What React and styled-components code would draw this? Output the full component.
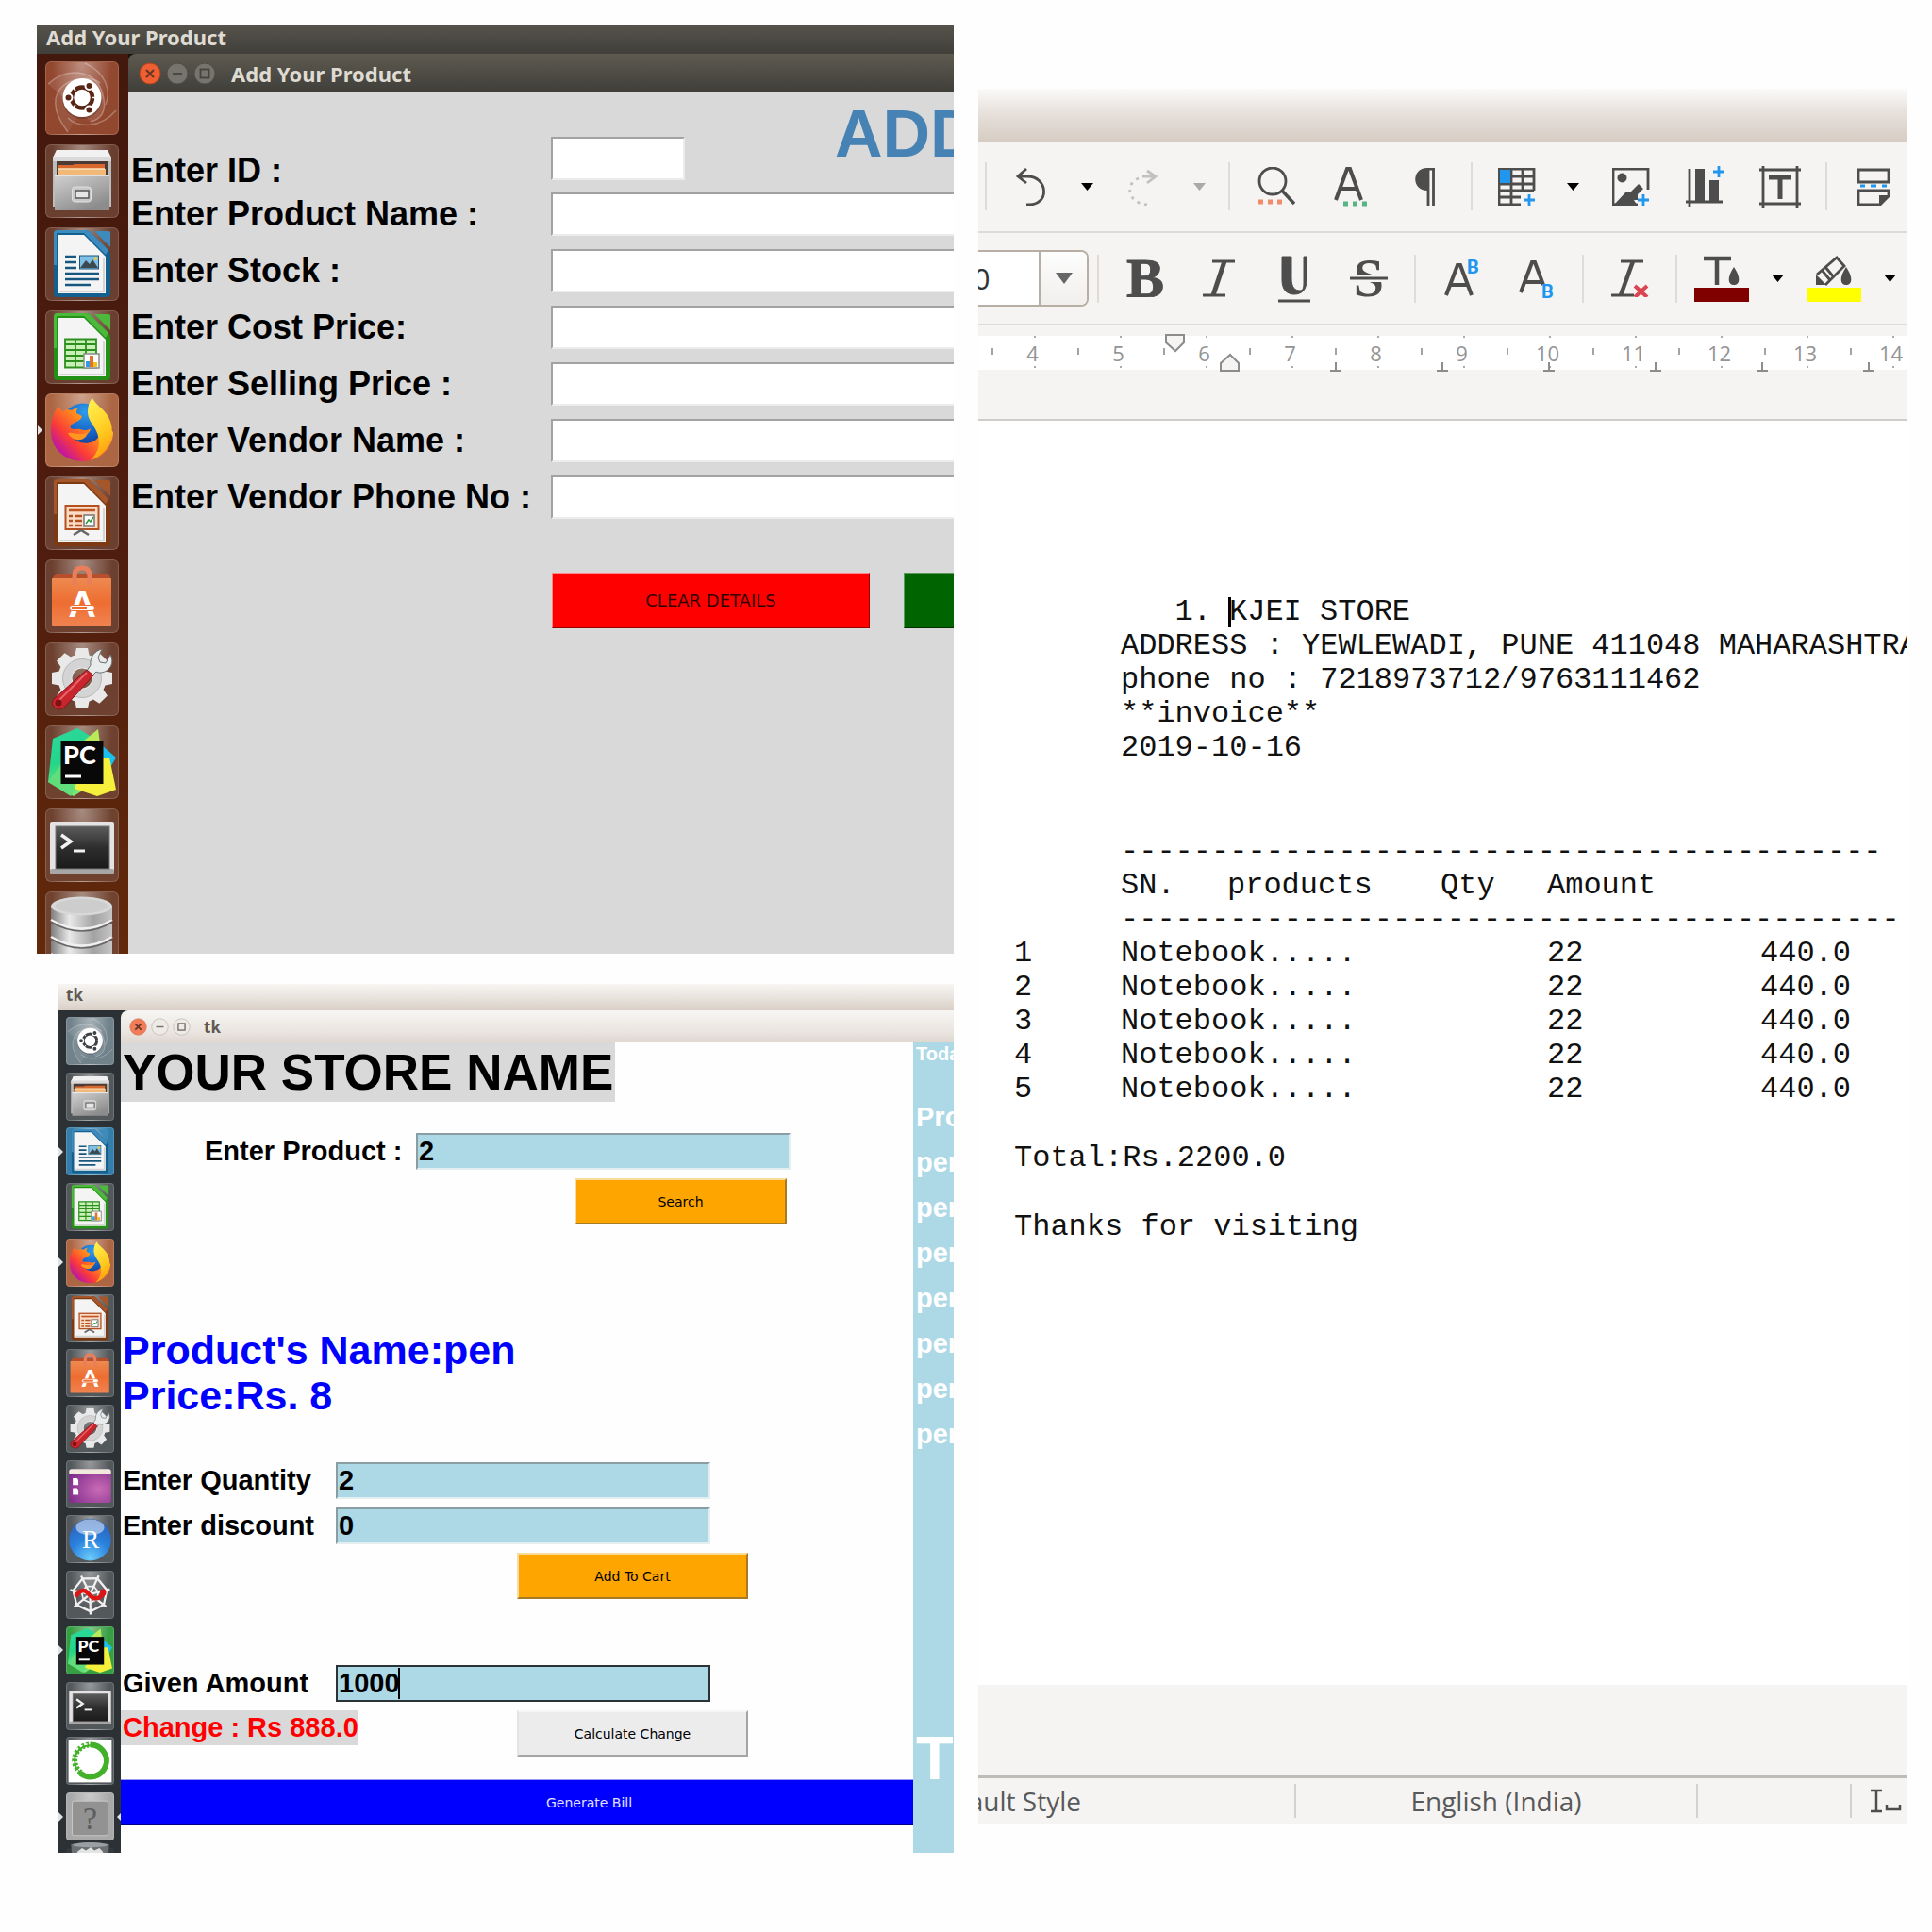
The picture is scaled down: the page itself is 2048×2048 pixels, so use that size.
import React from "react";
import styled, { createGlobalStyle, css } from "styled-components";

const GlobalStyle = createGlobalStyle`
  * { box-sizing: border-box; }
  body { margin: 0; background: #fefefe; }
  button, input, select { font: inherit; color: inherit; margin: 0; }
  button { cursor: pointer; }
`;

const UI_FONT = '"Noto Sans", "Open Sans", sans-serif';
const TK_FONT = '"Liberation Sans", Arial, sans-serif';
const BUTTON_FONT = '"DejaVu Sans", sans-serif';
const INK = "#4d4d4d";

/* ---------- page ---------- */

const Page = styled.main`
  display: grid;
  grid-template-columns: minmax(0, 1fr) minmax(0, 1fr);
  gap: 26px;
  padding: 26px;
  align-items: start;
`;

const LeftColumn = styled.div`
  display: flex;
  flex-direction: column;
  gap: 32px;
`;

const Desktop = styled.section`
  display: flex;
  flex-direction: column;
  min-height: 0;
  overflow: hidden;
  margin-left: ${(p) => p.$inset}px;
  aspect-ratio: ${(p) => p.$ratio};
`;

const DesktopBody = styled.div`
  display: flex;
  flex: 1;
  min-height: 0;
  background: ${(p) => (p.$light ? "#2b3033" : "#1c1210")};
`;

const darkBar = css`
  color: #dfdbd2;
  background: linear-gradient(#56534c, #403f39);
`;
const lightBar = css`
  color: #5e5952;
  background: linear-gradient(#f7f5f3, #e6e0da 60%, #d9cfc6);
`;

const MenuBar = styled.header`
  flex: none;
  display: flex;
  align-items: center;
  font-family: ${UI_FONT};
  font-weight: 700;
  ${(p) => (p.$light ? lightBar : darkBar)}
  height: ${(p) => (p.$light ? 28 : 31)}px;
  padding: 0 ${(p) => (p.$light ? 8 : 10)}px 6px;
  font-size: ${(p) => (p.$light ? 17 : 22)}px;
`;

const Win = styled.div`
  flex: 1;
  min-width: 0;
  display: flex;
  flex-direction: column;
`;

const TitleBar = styled.header`
  flex: none;
  display: flex;
  align-items: center;
  font-family: ${UI_FONT};
  font-weight: 700;
  border-top-left-radius: 8px;
  ${(p) => (p.$light ? lightBar : darkBar)}
  ${(p) => p.$light && "background: linear-gradient(#f7f6f3, #e9e4df 70%, #dfd7d0);"}
  ${(p) => !p.$light && "background: linear-gradient(#5e5a50, #3f3e39);"}
  height: ${(p) => (p.$light ? 34 : 41)}px;
  gap: ${(p) => (p.$light ? 4 : 5)}px;
  padding-left: ${(p) => (p.$light ? 9 : 11)}px;
  font-size: ${(p) => (p.$light ? 17 : 22)}px;
`;

const TitleText = styled.span`
  margin-left: ${(p) => (p.$light ? 10 : 11)}px;
`;

const WinButton = styled.button`
  padding: 0;
  border: 0;
  background: none;
  display: flex;
  svg {
    display: block;
    width: ${(p) => (p.$light ? 19 : 24)}px;
    height: ${(p) => (p.$light ? 19 : 24)}px;
  }
`;

function WindowControls({ light }) {
  const kinds = ["Close", "Minimize", "Maximize"];
  return kinds.map((k) => {
    const close = k === "Close";
    const fill = close ? (light ? "#f07c58" : "#ee5f31") : light ? "#eeebe7" : "#76746c";
    const ring = close ? (light ? "#d9805f" : "#b5431c") : light ? "#bfb8b0" : "#4f4d47";
    const mark = close ? "#6b3626" : light ? "#77716a" : "#45433e";
    return (
      <WinButton key={k} type="button" aria-label={k} $light={light}>
        <svg viewBox="0 0 24 24" fill="none">
          <circle cx="12" cy="12" r="11" fill={fill} stroke={ring} />
          {close && <path d="M8 8l8 8M16 8l-8 8" stroke={mark} strokeWidth="2.2" />}
          {k === "Minimize" && <path d="M7 12h10" stroke={mark} strokeWidth="1.8" />}
          {k === "Maximize" && <rect x="7.500" y="7.500" width="9" height="9" stroke={mark} strokeWidth="1.8" />}
        </svg>
      </WinButton>
    );
  });
}

/* ---------- launcher ---------- */

const Launcher = styled.nav`
  flex: none;
  display: flex;
  flex-direction: column;
  align-items: center;
  overflow: hidden;
  ${(p) =>
    p.$light
      ? css`
          width: 66px;
          padding-top: 7px;
          justify-content: space-between;
          background: #2b3134;
          > :last-child {
            margin-bottom: -46px;
          }
        `
      : css`
          width: 97px;
          padding-top: 8px;
          padding-right: 2px;
          gap: 10px;
          background: linear-gradient(#43180d, #4f1d0f 55%, #62290a);
        `}
`;

const Tile = styled.button`
  position: relative;
  flex: none;
  padding: 0;
  border: 1px solid ${(p) => (p.$tint === "transparent" ? "transparent" : "rgba(255, 255, 255, 0.16)")};
  border-radius: ${(p) => (p.$light ? 4 : 6)}px;
  width: ${(p) => (p.$light ? 51 : 78)}px;
  height: ${(p) => (p.$light ? 51 : 78)}px;
  background: radial-gradient(ellipse at 50% 0, rgba(255, 255, 255, 0.42), rgba(255, 255, 255, 0.04) 60%),
    ${(p) => p.$tint};
  svg {
    position: absolute;
    inset: -1px;
    width: calc(100% + 2px);
    height: calc(100% + 2px);
    overflow: visible;
  }
`;

const Running = styled.i`
  position: absolute;
  top: calc(50% - 5px);
  width: 0;
  height: 0;
  border: 5px solid transparent;
  ${(p) =>
    p.$right
      ? css`
          right: -9px;
          border-right-color: #e3e3e3;
          border-left-width: 0;
        `
      : css`
          left: -9px;
          border-left-color: #e3e3e3;
          border-right-width: 0;
        `}
`;

function UbuntuIcon({ dark = "#5a2415" }) {
  return (
    <svg viewBox="0 0 78 78" fill="none">
      <g stroke="#fff" strokeOpacity="0.28" strokeWidth="1.5">
        <path d="M3 24C22 6 52 8 60 32s-4 30-12 32" fill="#fff" fillOpacity="0.1" />
        <path d="M24 75C6 52 8 34 20 25s32-8 38-2" fill="#fff" fillOpacity="0.08" />
        <path d="M75 52C58 72 34 70 24 60" />
        <path d="M42 2C64 12 70 30 64 46" />
      </g>
      <circle cx="39" cy="40" r="21" fill="#000" fillOpacity="0.2" />
      <circle cx="39" cy="38.500" r="20.500" fill="#fff" />
      <circle cx="39" cy="38.500" r="11" stroke={dark} strokeWidth="4.500" />
      <g fill={dark} stroke="#fff" strokeWidth="2">
        <circle cx="24.500" cy="38.500" r="4" />
        <circle cx="46.500" cy="26" r="4" />
        <circle cx="46.500" cy="51.500" r="4" />
      </g>
      <path d="M32 31l-3-4M32 46l-3 4M50 38.500h6" stroke="#fff" strokeWidth="1.500" />
    </svg>
  );
}

function FilesIcon() {
  return (
    <svg viewBox="0 0 78 78">
      <defs>
        <linearGradient id="drawer" x1="0" y1="0" x2="0.600" y2="1">
          <stop offset="0" stopColor="#d2d2d2" />
          <stop offset="1" stopColor="#8c8c8c" />
        </linearGradient>
      </defs>
      <path d="M12 6h54l4 10v50H8V16z" fill="#bdbdbd" />
      <path d="M12 6h54l4 8H8z" fill="#f1f1f1" />
      <rect x="8" y="13" width="62" height="5" fill="#d9d9d9" />
      <rect x="12" y="18" width="54" height="15" fill="#4b3a35" />
      <path d="M14 22h15l2-1h32v12H14z" fill="#d9682f" />
      <path d="M13 26h51v8H13z" fill="#f2b877" />
      <path d="M14 26h49" stroke="#fbe0b8" strokeWidth="1.500" />
      <rect x="10" y="32" width="58" height="38" fill="url(#drawer)" />
      <path d="M10 33h58" stroke="#ececec" strokeWidth="1.500" />
      <rect x="28.500" y="45" width="20" height="16" rx="3" fill="#c9c9c9" stroke="#e0e0e0" />
      <rect x="32" y="49" width="14" height="8" fill="#e6e6e6" stroke="#555" strokeWidth="1.500" />
    </svg>
  );
}

function OfficeDoc({ color, dark, children }) {
  return (
    <svg viewBox="0 0 78 78">
      <path d="M9 7q0-4 4-4h30q3 0 5 2l19 19q2 2 2 5v41q0 4-4 4H13q-4 0-4-4z" fill={dark} />
      <path d="M9 7q0-4 4-4h30q3 0 5 2l19 19-3 5L41 6H12v34H9z" fill={color} />
      <path d="M52 4h15q2 0 2 2v15z" fill={color} />
      <path d="M13 8h28l23 23v39H13z" fill="#f4f4f4" />
      <path d="M15 68h47V33" fill="none" stroke="#d4d4d4" strokeWidth="2" />
      {children}
    </svg>
  );
}

function WriterIcon() {
  return (
    <OfficeDoc color="#3d8bbd" dark="#12608f">
      <path d="M21 31h12M21 37h12M21 43h12M21 49h36M21 55h36M21 61h27" stroke="#17577f" strokeWidth="2.600" />
      <rect x="36.500" y="30" width="20" height="14" fill="#7fc0e6" stroke="#17577f" />
      <path d="M37 43l6-8 4 4 3-5 6 9z" fill="#3c4a50" />
      <circle cx="53.500" cy="33" r="2" fill="#e8c84a" />
    </OfficeDoc>
  );
}

function CalcIcon() {
  return (
    <OfficeDoc color="#4cb83c" dark="#239016">
      <rect x="21" y="30" width="33" height="31" fill="#c9f0b6" />
      <path
        d="M21 30.500h33v30H21zM21 36h33M21 42h33M21 48h33M21 54h33M32 30v31M43 30v31"
        fill="none"
        stroke="#2c8f1e"
        strokeWidth="1.800"
      />
      <rect x="41" y="46" width="16" height="15" fill="#fff" stroke="#8a8a8a" strokeWidth="1.500" />
      <path d="M43 60v-6h4v6z" fill="#2f9be0" />
      <path d="M47 60V48h4v12z" fill="#e2732e" />
      <path d="M51 60v-5h4v5z" fill="#f0c020" />
    </OfficeDoc>
  );
}

function ImpressIcon() {
  return (
    <OfficeDoc color="#a5562a" dark="#7d3a12">
      <rect x="21.500" y="31" width="35" height="25" fill="#fbdcc8" stroke="#b5501f" strokeWidth="2" />
      <path d="M25 36h28" stroke="#c0561f" strokeWidth="2.500" />
      <path d="M25 42h4M25 47h4M25 52h4M31 42h8M31 47h8M31 52h8" stroke="#b5501f" strokeWidth="2.500" />
      <rect x="41" y="41" width="11" height="12" fill="#fff" stroke="#777" strokeWidth="1.500" />
      <path d="M43 50l3-4 2 2 3-5" fill="none" stroke="#2f9a3a" strokeWidth="1.500" />
      <path d="M30 62l8-5 8 5" fill="none" stroke="#666" strokeWidth="2.500" />
    </OfficeDoc>
  );
}

function FirefoxIcon() {
  return (
    <svg viewBox="0 0 78 78">
      <defs>
        <radialGradient id="globe" cx="0.550" cy="0.200" r="0.900">
          <stop offset="0" stopColor="#2f9bea" />
          <stop offset="0.600" stopColor="#1560c4" />
          <stop offset="1" stopColor="#1c2f7c" />
        </radialGradient>
        <linearGradient id="fox" x1="0.900" y1="0.150" x2="0.150" y2="0.800">
          <stop offset="0" stopColor="#ffd52e" />
          <stop offset="0.400" stopColor="#ff8a1c" />
          <stop offset="0.750" stopColor="#fb3b38" />
          <stop offset="1" stopColor="#c4189a" />
        </linearGradient>
        <linearGradient id="tail" x1="0.300" y1="0" x2="0.600" y2="1">
          <stop offset="0" stopColor="#fff04f" />
          <stop offset="0.600" stopColor="#ffc81e" />
          <stop offset="1" stopColor="#ff9a10" />
        </linearGradient>
      </defs>
      <circle cx="40" cy="33" r="22.500" fill="url(#globe)" />
      <path
        d="M14 13c1 3 2 5 5 6 3-2 6-2 9-1 2-1 4-3 7-3-2 2-2 4-2 6 2 1 4 2 6 3-1 4-4 5-8 7-3 2-5 3-4 6 4 2 8 0 10 1 3 1 8 2 11-1-1 5-4 8-10 9-5 1-9 0-11-2 5 8 15 11 24 7 8-4 10-14 6-24 8 8 10 10 15 14 0 16-14 31-32 31C20 72 6 58 6 40c0-12 3-20 8-27z"
        fill="url(#fox)"
      />
      <path
        d="M50 5c3 7 12 11 17 20 7 13 4 28-6 38-4 4-8 6-13 8 9-9 11-19 7-29-3-8-9-12-10-21 0-6 1-12 5-16z"
        fill="url(#tail)"
      />
      <path d="M24 42c5-1 8 1 11 1 5 0 8 0 10-2-1 6-6 9-12 8-4-1-8-4-9-7z" fill="#ff9620" />
    </svg>
  );
}

function SoftwareIcon() {
  return (
    <svg viewBox="0 0 78 78">
      <defs>
        <linearGradient id="bag" x1="0" y1="0" x2="0" y2="1">
          <stop offset="0" stopColor="#ee8a50" />
          <stop offset="0.500" stopColor="#ee6d31" />
          <stop offset="1" stopColor="#f08350" />
        </linearGradient>
      </defs>
      <path d="M11 15h56l3 6H7z" fill="#b74f2d" />
      <rect x="7" y="20" width="63" height="51" rx="1" fill="url(#bag)" />
      <path d="M31 27v-9q0-9 8-9t8 9v9" fill="none" stroke="#e87e5a" strokeWidth="5" />
      <text x="39" y="61" textAnchor="middle" fontFamily="Lato, sans-serif" fontWeight="900" fontSize="38" fill="#fff">
        A
      </text>
      <rect x="25.500" y="48.500" width="27" height="6" rx="3" fill="#fff" stroke="#ee6d31" strokeWidth="1" />
      <rect x="28" y="50" width="16" height="3" fill="#ee6d31" />
    </svg>
  );
}

function SettingsIcon() {
  const teeth = [0, 45, 90, 135, 180, 225, 270, 315];
  return (
    <svg viewBox="0 0 78 78">
      {teeth.map((a) => (
        <path key={a} d="M31 16L33 6h12l2 10z" fill="#e9e9e9" transform={`rotate(${a} 39 38)`} />
      ))}
      <circle cx="39" cy="38" r="18" fill="none" stroke="#e9e9e9" strokeWidth="15" />
      <circle cx="39" cy="38" r="16" fill="none" stroke="#d4d4d4" strokeWidth="9" />
      <circle cx="39" cy="38" r="20.500" fill="none" stroke="#b9b9b9" strokeWidth="1" />
      <path
        d="M44 30l4-6c-1-8 4-15 12-17l-4 9 2 5 6 1 5-9c5 9-1 18-10 19-2 0-4 0-5-1l-5 5z"
        fill="#e8ecec"
        stroke="#6d7171"
        strokeWidth="1"
      />
      <path d="M44 29l7 6-31 34q-5 4-10 0t-1-9z" fill="#c9252d" stroke="#841419" />
      <path d="M44 32L15 61" stroke="#e8666a" strokeWidth="2" />
      <circle cx="14" cy="64" r="3.500" fill="#7d1216" />
    </svg>
  );
}

function PyCharmIcon() {
  return (
    <svg viewBox="0 0 78 78">
      <defs>
        <linearGradient id="pcGreen" x1="0" y1="0" x2="0.300" y2="1">
          <stop offset="0" stopColor="#2ed8a0" />
          <stop offset="0.500" stopColor="#22d68a" />
          <stop offset="1" stopColor="#7be572" />
        </linearGradient>
      </defs>
      <path d="M61 22l14 12-8 14-10-4z" fill="#1cc0ee" />
      <path d="M8 14l26-11 20 12 8 40-32 20L3 60z" fill="url(#pcGreen)" />
      <path d="M36 20L56 4l4 30z" fill="#b9ea58" />
      <path d="M62 34h6l7 34-20 7-24-8 3-9z" fill="#f5f03c" />
      <path d="M3 60l16-22 12 30-4 7z" fill="#62dd7c" />
      <rect x="16.500" y="17" width="45" height="45" fill="#080808" />
      <text x="19" y="41" fontFamily="Lato, sans-serif" fontWeight="900" fontSize="27" fill="#fff">
        PC
      </text>
      <rect x="21" y="52.500" width="17" height="3" fill="#fff" />
    </svg>
  );
}

function TerminalIcon() {
  return (
    <svg viewBox="0 0 78 78">
      <defs>
        <linearGradient id="screen" x1="0" y1="0" x2="0" y2="1">
          <stop offset="0" stopColor="#5c5c5c" />
          <stop offset="0.500" stopColor="#2e2e2e" />
          <stop offset="1" stopColor="#1a1a1a" />
        </linearGradient>
      </defs>
      <rect x="5" y="14" width="68" height="55" rx="2" fill="#e4e2e2" />
      <rect x="5" y="64" width="68" height="5" rx="2" fill="#a9a6a6" />
      <rect x="11" y="19" width="57" height="45" fill="url(#screen)" stroke="#777" />
      <path d="M17 28l10 7-10 7" fill="none" stroke="#f2f2f2" strokeWidth="3.500" />
      <path d="M30 45h12" stroke="#f2f2f2" strokeWidth="3" />
    </svg>
  );
}

function DatabaseIcon() {
  return (
    <svg viewBox="0 0 78 78">
      <defs>
        <linearGradient id="steel" x1="0" y1="0" x2="1" y2="0">
          <stop offset="0" stopColor="#7d7d7d" />
          <stop offset="0.300" stopColor="#e9e9e9" />
          <stop offset="0.700" stopColor="#a2a2a2" />
          <stop offset="1" stopColor="#c5c5c5" />
        </linearGradient>
      </defs>
      {[46, 28, 10].map((y) => (
        <g key={y}>
          <path d={`M6 ${y + 6}v13q33 19 65 0v-13z`} fill="url(#steel)" />
          <path d={`M6 ${y + 20}q33 19 65 0`} fill="none" stroke="#f0f0f0" strokeWidth="2.500" />
          <path d={`M6 ${y + 22.5}q33 19 65 0`} fill="none" stroke="#666" strokeWidth="1.500" />
        </g>
      ))}
      <ellipse cx="38.500" cy="15.500" rx="32.500" ry="10" fill="#d8d8d8" />
      <ellipse cx="38.500" cy="15.500" rx="28" ry="7.500" fill="#cdcdcd" />
    </svg>
  );
}

function DesktopsIcon() {
  return (
    <svg viewBox="0 0 78 78">
      <defs>
        <radialGradient id="violet" cx="0.700" cy="0.600" r="0.800">
          <stop offset="0" stopColor="#c96bb5" />
          <stop offset="1" stopColor="#7d2a8c" />
        </radialGradient>
      </defs>
      <rect x="5" y="14" width="68" height="55" rx="4" fill="url(#violet)" />
      <path d="M5 18q0-4 4-4h60q4 0 4 4v5H5z" fill="#efeadb" />
      <path d="M11 29h7l2 3v8h-9zM11 45h7l2 3v8h-9z" fill="#fff" />
    </svg>
  );
}

function RStudioIcon() {
  return (
    <svg viewBox="0 0 78 78">
      <defs>
        <radialGradient id="ball" cx="0.500" cy="0.950" r="0.950">
          <stop offset="0" stopColor="#6ccdfb" />
          <stop offset="0.500" stopColor="#2a82de" />
          <stop offset="1" stopColor="#2b5fb8" />
        </radialGradient>
      </defs>
      <circle cx="39" cy="40" r="34" fill="url(#ball)" />
      <ellipse cx="39" cy="20" rx="23" ry="13" fill="#fff" fillOpacity="0.500" />
      <text x="40" y="53" textAnchor="middle" fontFamily="Liberation Serif, serif" fontSize="42" fill="#fff">
        R
      </text>
    </svg>
  );
}

function SpyderIcon() {
  const spokes = [0, 51, 103, 154, 206, 257, 309];
  const ring = (r) =>
    spokes
      .map((a) => {
        const t = ((a + 25) * Math.PI) / 180;
        return `${39 + r * Math.sin(t)},${38 - r * Math.cos(t)}`;
      })
      .join(" ");
  return (
    <svg viewBox="0 0 78 78" fill="none" stroke="#f0f0f0" strokeWidth="3.500">
      <polygon points={ring(28)} />
      <polygon points={ring(14)} strokeWidth="2.500" />
      {spokes.map((a) => (
        <path key={a} d="M39 38V5" transform={`rotate(${a + 25} 39 38)`} />
      ))}
      <path d="M16 42c6-12 14-12 20-5s14 14 26-1" stroke="#dd1515" strokeWidth="7" />
      <circle cx="60" cy="35" r="5" fill="#dd1515" stroke="none" />
    </svg>
  );
}

function AnacondaIcon() {
  return (
    <svg viewBox="0 0 78 78" fill="none">
      <rect x="4" y="5" width="70" height="69" fill="#fff" />
      <circle cx="39" cy="39" r="25" stroke="#43b02a" strokeWidth="3" />
      <path d="M39 13a26 26 0 1 1-16 46" stroke="#43b02a" strokeWidth="9" />
      <path d="M24 58A25 25 0 0 1 38 13" stroke="#43b02a" strokeWidth="9" strokeDasharray="4 3" />
      <path d="M20 56A25 25 0 0 1 36 12" stroke="#fff" strokeWidth="2" strokeDasharray="3 5" />
    </svg>
  );
}

function UnknownIcon() {
  return (
    <svg viewBox="0 0 78 78">
      <rect x="10" y="14" width="58" height="56" rx="3" fill="#929292" stroke="#c8c8c8" strokeWidth="1.500" />
      <text x="39" y="60" textAnchor="middle" fontFamily="Liberation Serif, serif" fontSize="52" fill="#5e5e5e">
        ?
      </text>
    </svg>
  );
}

function TrashIcon() {
  return (
    <svg viewBox="0 0 78 78">
      <path d="M8 -6q31-6 62 0l-6 60H14z" fill="#6a6f72" />
      <ellipse cx="39" cy="-5" rx="28" ry="4" fill="#9a9fa2" />
      <path d="M18 6l8-6 6 4 8-5 6 5 8-4 6 6-4 24H22z" fill="#e3e3e3" />
    </svg>
  );
}

const BROWN = "rgba(110, 65, 48, 0.75)";
const SLATE = "#4c5154";

const darkLauncher = [
  { name: "Search your computer", icon: <UbuntuIcon />, tint: "#8e3f26" },
  { name: "Files", icon: <FilesIcon />, tint: BROWN },
  { name: "LibreOffice Writer", icon: <WriterIcon />, tint: BROWN },
  { name: "LibreOffice Calc", icon: <CalcIcon />, tint: BROWN },
  { name: "Firefox", icon: <FirefoxIcon />, tint: "#a9603c", running: true },
  { name: "LibreOffice Impress", icon: <ImpressIcon />, tint: BROWN },
  { name: "Ubuntu Software", icon: <SoftwareIcon />, tint: BROWN },
  { name: "System Settings", icon: <SettingsIcon />, tint: BROWN },
  { name: "PyCharm", icon: <PyCharmIcon />, tint: BROWN },
  { name: "Terminal", icon: <TerminalIcon />, tint: BROWN },
  { name: "Database", icon: <DatabaseIcon />, tint: BROWN },
];

const lightLauncher = [
  { name: "Search your computer", icon: <UbuntuIcon dark="#3c4246" />, tint: "#6b7d86" },
  { name: "Files", icon: <FilesIcon />, tint: SLATE },
  { name: "LibreOffice Writer", icon: <WriterIcon />, tint: "#2c79a5", running: true },
  { name: "LibreOffice Calc", icon: <CalcIcon />, tint: SLATE },
  { name: "Firefox", icon: <FirefoxIcon />, tint: "#a9603c", running: true },
  { name: "LibreOffice Impress", icon: <ImpressIcon />, tint: SLATE },
  { name: "Ubuntu Software", icon: <SoftwareIcon />, tint: SLATE },
  { name: "System Settings", icon: <SettingsIcon />, tint: SLATE },
  { name: "Workspaces", icon: <DesktopsIcon />, tint: SLATE },
  { name: "RStudio", icon: <RStudioIcon />, tint: SLATE },
  { name: "Spyder", icon: <SpyderIcon />, tint: SLATE },
  { name: "PyCharm", icon: <PyCharmIcon />, tint: "#2f9a3c", running: true },
  { name: "Terminal", icon: <TerminalIcon />, tint: SLATE },
  { name: "Anaconda", icon: <AnacondaIcon />, tint: SLATE },
  { name: "tk", icon: <UnknownIcon />, tint: "#a5a5a5", running: true, active: true },
  { name: "Trash", icon: <TrashIcon />, tint: "transparent" },
];

function LauncherBar({ items, light }) {
  return (
    <Launcher $light={light} aria-label="Launcher">
      {items.map((it) => (
        <Tile key={it.name} type="button" aria-label={it.name} $tint={it.tint} $light={light}>
          {it.icon}
          {it.running && <Running />}
          {it.active && <Running $right />}
        </Tile>
      ))}
    </Launcher>
  );
}

/* ---------- shared form parts ---------- */

const TkButton = styled.button`
  flex: none;
  font-family: ${BUTTON_FONT};
  font-weight: 400;
  border-style: solid;
  padding: 0;
  white-space: nowrap;
`;

/* ---------- add product window ---------- */

const ProductForm = styled.form`
  flex: 1;
  background: #d9d9d9;
  font-family: ${TK_FONT};
  font-weight: 700;
  color: #000;
  overflow: hidden;
`;

const FirstRow = styled.div`
  display: flex;
  align-items: flex-end;
  height: 99px;
`;

const FieldRow = styled.div`
  display: flex;
  align-items: center;
  height: 60px;
`;

const FieldLabel = styled.label`
  flex: none;
  width: 448px;
  padding-left: 3px;
  font-size: 36px;
  line-height: 32px;
  white-space: nowrap;
`;

const Field = styled.input`
  height: 46px;
  min-width: 0;
  border: 2px solid;
  border-color: #a2a2a2 #ececec #ececec #a2a2a2;
  border-radius: 0;
  background: #fff;
  padding: 0 4px;
  outline: 0;
  font-size: 29px;
  font-weight: 700;
  ${(p) =>
    p.$short
      ? css`
          flex: none;
          width: 142px;
          margin-bottom: 6px;
        `
      : css`
          flex: 1;
          border-right: 0;
        `}
`;

const FormTitle = styled.h1`
  margin: 0 0 20px 159px;
  font-size: 70px;
  line-height: 70px;
  color: #4682b4;
  white-space: nowrap;
`;

const ActionRow = styled.div`
  display: flex;
  gap: 36px;
  padding: 50px 0 0 449px;
`;

const FormButton = styled(TkButton)`
  width: 337px;
  height: 59px;
  border-width: 1px;
  font-size: 18px;
  color: #300;
  background: ${(p) => (p.$green ? "#006400" : "#f00")};
  border-color: ${(p) => (p.$green ? "#5c9a5c #003200 #003200 #5c9a5c" : "#f88 #900 #900 #f88")};
`;

const productFields = [
  ["name", "Enter Product Name :"],
  ["stock", "Enter Stock :"],
  ["cost", "Enter Cost Price:"],
  ["selling", "Enter Selling Price :"],
  ["vendor", "Enter Vendor Name :"],
  ["phone", "Enter Vendor Phone No :"],
];

function AddProductDesktop() {
  return (
    <Desktop $inset={13} $ratio="972 / 985">
      <MenuBar>Add Your Product</MenuBar>
      <DesktopBody>
        <LauncherBar items={darkLauncher} />
        <Win>
          <TitleBar>
            <WindowControls />
            <TitleText>Add Your Product</TitleText>
          </TitleBar>
          <ProductForm>
            <FirstRow>
              <FieldLabel htmlFor="product-id">Enter ID :</FieldLabel>
              <Field id="product-id" $short />
              <FormTitle>ADD</FormTitle>
            </FirstRow>
            {productFields.map(([id, label]) => (
              <FieldRow key={id}>
                <FieldLabel htmlFor={`product-${id}`}>{label}</FieldLabel>
                <Field id={`product-${id}`} />
              </FieldRow>
            ))}
            <ActionRow>
              <FormButton type="button">CLEAR DETAILS</FormButton>
              <FormButton type="button" $green aria-label="Add to database" />
            </ActionRow>
          </ProductForm>
        </Win>
      </DesktopBody>
    </Desktop>
  );
}

/* ---------- store window ---------- */

const StoreBody = styled.div`
  flex: 1;
  min-height: 0;
  display: flex;
  background: #fefefe;
  font-family: ${TK_FONT};
  font-weight: 700;
  color: #000;
`;

const StoreMain = styled.form`
  flex: 1;
  min-width: 0;
  display: flex;
  flex-direction: column;
  align-items: flex-start;
`;

const StoreName = styled.h1`
  margin: 0;
  padding: 0 2px;
  height: 63px;
  font-size: 53px;
  line-height: 63px;
  background: #d9d9d9;
  white-space: nowrap;
`;

const StoreRow = styled.div`
  display: flex;
  align-items: center;
  margin-top: ${(p) => p.$top}px;
  padding-left: ${(p) => (p.$centered ? 89 : 2)}px;
`;

const StoreLabel = styled.label`
  flex: none;
  width: ${(p) => (p.$centered ? 224 : 226)}px;
  font-size: 29px;
  line-height: 37px;
  white-space: nowrap;
`;

const StoreField = styled.input`
  width: 397px;
  height: 39px;
  padding: 0 1px;
  border: 2px solid;
  border-color: ${(p) => (p.$active ? "#2a3336" : "#8a9da3 #e3eef1 #e3eef1 #8a9da3")};
  border-radius: 0;
  outline: 0;
  background: #add8e6;
  font-size: 29px;
  font-weight: 700;
`;

const CaretBox = styled.div`
  position: relative;
  &::after {
    content: "";
    position: absolute;
    left: 66px;
    top: 3px;
    width: 2px;
    height: 33px;
    background: #000;
  }
`;

const StoreButton = styled(TkButton)`
  width: ${(p) => (p.$narrow ? 225 : 245)}px;
  height: 49px;
  margin-top: ${(p) => (p.$inline ? 0 : 9)}px;
  margin-left: ${(p) => (p.$inline ? 0 : p.$narrow ? 481 : 420)}px;
  border-width: 2px;
  font-size: 14px;
  background: ${(p) => (p.$plain ? "#ececec" : "#ffa500")};
  border-color: ${(p) => (p.$plain ? "#f6f6f6 #a5a5a5 #a5a5a5 #e4e4e4" : "#f7dc9a #a87a24 #a87a24 #f3dca8")};
`;

const ProductInfo = styled.p`
  margin: 109px 0 0;
  padding-left: 2px;
  font-size: 43px;
  line-height: 48px;
  color: #00f;
  white-space: nowrap;
`;

const ChangeRow = styled.div`
  display: grid;
  grid-template-columns: 420px auto;
  justify-items: start;
  align-items: start;
  margin-top: 9px;
`;

const Change = styled.output`
  padding: 0 0 0 2px;
  font-size: 29px;
  line-height: 37px;
  color: #f00;
  background: #d9d9d9;
  white-space: nowrap;
`;

const BillButton = styled(TkButton)`
  align-self: stretch;
  height: 49px;
  margin-top: 24px;
  padding-left: 153px;
  border-width: 1px 0;
  border-color: #9c9cf4 transparent #000084;
  font-size: 14px;
  color: #e3e3ff;
  background: #00f;
`;

const Cart = styled.aside`
  flex: none;
  width: 43px;
  padding-left: 3px;
  overflow: hidden;
  background: #add8e6;
  color: #fff;
  white-space: nowrap;
`;

const CartDate = styled.div`
  font-size: 20px;
  line-height: 24px;
  margin-bottom: 31px;
`;

const CartLine = styled.div`
  font-size: 29px;
  line-height: 48px;
`;

const CartTotal = styled.div`
  margin-top: 287px;
  font-size: 65px;
  line-height: 65px;
`;

function StoreDesktop() {
  return (
    <Desktop $inset={36} $ratio="949 / 921">
      <MenuBar $light>tk</MenuBar>
      <DesktopBody $light>
        <LauncherBar items={lightLauncher} light />
        <Win>
          <TitleBar $light>
            <WindowControls light />
            <TitleText $light>tk</TitleText>
          </TitleBar>
          <StoreBody>
            <StoreMain>
              <StoreName>YOUR STORE NAME</StoreName>
              <StoreRow $top={33} $centered>
                <StoreLabel htmlFor="s-product" $centered>
                  Enter Product :
                </StoreLabel>
                <StoreField id="s-product" defaultValue="2" />
              </StoreRow>
              <StoreButton type="button" $narrow>
                Search
              </StoreButton>
              <ProductInfo>
                Product's Name:pen
                <br />
                Price:Rs. 8
              </ProductInfo>
              <StoreRow $top={47}>
                <StoreLabel htmlFor="s-quantity">Enter Quantity</StoreLabel>
                <StoreField id="s-quantity" defaultValue="2" />
              </StoreRow>
              <StoreRow $top={9}>
                <StoreLabel htmlFor="s-discount">Enter discount</StoreLabel>
                <StoreField id="s-discount" defaultValue="0" />
              </StoreRow>
              <StoreButton type="button">Add To Cart</StoreButton>
              <StoreRow $top={70}>
                <StoreLabel htmlFor="s-given">Given Amount</StoreLabel>
                <CaretBox>
                  <StoreField id="s-given" defaultValue="1000" $active />
                </CaretBox>
              </StoreRow>
              <ChangeRow>
                <Change>Change : Rs 888.0</Change>
                <StoreButton type="button" $plain $inline>
                  Calculate Change
                </StoreButton>
              </ChangeRow>
              <BillButton type="button">Generate Bill</BillButton>
            </StoreMain>
            <Cart>
              <CartDate>Toda</CartDate>
              <CartLine>Pro</CartLine>
              {[1, 2, 3, 4, 5, 6, 7].map((n) => (
                <CartLine key={n}>pen</CartLine>
              ))}
              <CartTotal>T</CartTotal>
            </Cart>
          </StoreBody>
        </Win>
      </DesktopBody>
    </Desktop>
  );
}

/* ---------- writer window ---------- */

const Writer = styled.section`
  margin-top: 68px;
  min-width: 0;
  overflow: hidden;
  background: #f5f4f2;
  font-family: "Open Sans", "Noto Sans", sans-serif;
`;

const WriterTitle = styled.div`
  height: 56px;
  background: linear-gradient(#fbfaf9, #e7e1dc 45%, #d6ccc3);
`;

const Toolbar = styled.div`
  display: flex;
  align-items: center;
  height: ${(p) => p.$height}px;
  border-bottom: 2px solid #dedad5;
  overflow: hidden;
  > * {
    flex: none;
  }
`;

const Tool = styled.button`
  width: ${(p) => (p.$split ? 75 : 79)}px;
  height: 64px;
  padding: 0;
  border: 0;
  background: none;
  display: flex;
  align-items: center;
  justify-content: center;
  opacity: ${(p) => (p.disabled ? 0.3 : 1)};
`;

const Drop = styled(Tool)`
  width: 44px;
`;

const Separator = styled.div`
  display: flex;
  justify-content: center;
  width: 20px;
  height: 51px;
  &::before {
    content: "";
    width: 2px;
    background: #dfdbd7;
  }
`;

const ToolStart = styled(Separator)`
  width: 18px;
  padding-right: 2px;
`;

const SizeBox = styled.div`
  position: relative;
  width: 117px;
  height: 60px;
  border: 2px solid #b8aea4;
  border-left: 0;
  border-radius: 0 8px 8px 0;
  background: #fff;
  overflow: hidden;
`;

const SizeSelect = styled.select`
  appearance: none;
  width: 150px;
  height: 56px;
  margin-left: -40px;
  padding: 0 0 0 17px;
  border: 0;
  background: transparent;
  font-size: 31px;
  color: #333;
`;

const SizeArrow = styled.span`
  position: absolute;
  inset: 0 0 0 64px;
  display: flex;
  align-items: center;
  justify-content: center;
  border-left: 2px solid #b8aea4;
  background: linear-gradient(#fdfdfd, #f1efed);
  pointer-events: none;
`;

function Arrow({ color = "#000", width = 13, height = 8 }) {
  return (
    <svg width={width} height={height} viewBox="0 0 13 8" preserveAspectRatio="none">
      <path d="M0 0h13L6.500 8z" fill={color} />
    </svg>
  );
}

function Glyph({ children, width = 40, height = 40, ...rest }) {
  return (
    <svg
      width={width}
      height={height}
      viewBox={`0 0 ${width} ${height}`}
      fill="none"
      stroke={INK}
      strokeWidth="2.800"
      {...rest}
    >
      {children}
    </svg>
  );
}

const BLUE = "#2196ee";

const icons = {
  undo: (
    <Glyph>
      <path d="M15 1L6 9l9 7M6 9h10c22 0 24 30 2 30h-3" />
    </Glyph>
  ),
  redo: (
    <Glyph>
      <path d="M24 3l9 6-9 7M32 9H19" />
      <path d="M15 11C1 16 2 37 24 39" strokeDasharray="3 5" />
    </Glyph>
  ),
  find: (
    <Glyph height="42">
      <circle cx="16" cy="15" r="14" />
      <path d="M26 25l13 14" strokeWidth="3.500" />
      <path d="M1 37h5M11 37h5M21 37h5" stroke="#f08c6c" strokeWidth="5" />
    </Glyph>
  ),
  spell: (
    <Glyph width="36" height="42">
      <path d="M2 35L14 2h3l12 33M6 23h19" strokeWidth="4" />
      <path d="M10 39h5M20 39h5M30 39h5" stroke="#55b585" strokeWidth="5" />
    </Glyph>
  ),
  pilcrow: (
    <Glyph width="22">
      <path d="M12 1h9M14 1v39M19.500 1v39" />
      <path d="M13 0v24C-4 24-4 0 13 0z" fill={INK} stroke="none" />
    </Glyph>
  ),
  table: (
    <Glyph>
      <path d="M38 24V1H1v38h23M1 9h37M1 17h37M1 24h37M1 31h23M14 1v38M26 1v23" />
      <rect x="2" y="2" width="11" height="14" fill={BLUE} stroke="none" />
      <path d="M33 28v12M27 34h12" stroke={BLUE} />
    </Glyph>
  ),
  image: (
    <Glyph>
      <path d="M38 23V1H1v38h26" />
      <circle cx="10.500" cy="10.500" r="5" fill={INK} stroke="none" />
      <path d="M2 39l13-14h5l8-8 5 5-6 6v6h-4l3 5z" fill={INK} stroke="none" />
      <path d="M33 28v12M27 34h12" stroke={BLUE} />
    </Glyph>
  ),
  chart: (
    <Glyph width="42" height="44">
      <path d="M4 3v40M0 38h39" />
      <path d="M10 3h10v35H10zM25 15h10v23H25z" fill={INK} stroke="none" />
      <path d="M35 0v12M29 6h12" stroke={BLUE} />
    </Glyph>
  ),
  textbox: (
    <Glyph width="44" height="44">
      <path d="M0 4h44M0 40h44M4 0v44M40 0v44" />
      <path d="M10 12h24M22 12v23" strokeWidth="5" />
    </Glyph>
  ),
  pagebreak: (
    <Glyph width="36">
      <path d="M2 2h32v13H2zM2 24h32v6l-9 9H2z" />
      <path d="M24 39v-10h10z" fill={INK} stroke="none" />
      <path d="M4 19h5M15 19h6M27 19h5" stroke={BLUE} />
    </Glyph>
  ),
  bold: (
    <Glyph width="42">
      <text x="1" y="40" fontFamily="Liberation Serif, serif" fontWeight="700" fontSize="60" fill={INK} stroke={INK} strokeWidth="1">
        B
      </text>
    </Glyph>
  ),
  italic: (
    <Glyph width="36">
      <path d="M10 2h24M0 38h24" />
      <path d="M23 2L11 38" strokeWidth="5" />
    </Glyph>
  ),
  underline: (
    <Glyph width="36" height="52">
      <path d="M5 3h10v23c0 10 4 13 9 13 4 0 4-4 4-11V3h3v25c0 10-5 15-13 15S5 38 5 28z" fill={INK} stroke={INK} strokeWidth="1" />
      <path d="M1 50h34" />
    </Glyph>
  ),
  strike: (
    <Glyph>
      <text x="20" y="39" textAnchor="middle" fontFamily="Liberation Serif, serif" fontWeight="700" fontSize="58" fill={INK} stroke="none">
        S
      </text>
      <path d="M5 20h32" stroke="#f5f4f2" strokeWidth="8" />
      <path d="M0 20h40" />
    </Glyph>
  ),
  superscript: (
    <Glyph width="38" height="42">
      <path d="M2 39L14 7h3l12 32M6 28h19" strokeWidth="4" />
      <text x="24" y="16" fontFamily="Roboto, sans-serif" fontWeight="700" fontSize="20" fill={BLUE} stroke="none">
        B
      </text>
    </Glyph>
  ),
  subscript: (
    <Glyph width="38" height="42">
      <path d="M2 36L14 4h3l9 24M6 25h19" strokeWidth="4" />
      <text x="24" y="42" fontFamily="Roboto, sans-serif" fontWeight="700" fontSize="20" fill={BLUE} stroke="none">
        B
      </text>
    </Glyph>
  ),
  clear: (
    <Glyph>
      <path d="M10 2h24M0 38h24" />
      <path d="M23 2L10 38" strokeWidth="4.500" />
      <path d="M25 28l13 12M38 28L25 40" stroke="#da4453" strokeWidth="4" />
    </Glyph>
  ),
  color: (
    <Glyph width="58" height="50">
      <path d="M10 4h29M24 4v28" strokeWidth="4.500" />
      <path d="M42 13c8 12 6 19 0 19s-8-7 0-19z" fill={INK} stroke="none" />
      <rect y="35" width="58" height="15" fill="#800000" stroke="none" />
    </Glyph>
  ),
  highlight: (
    <Glyph width="58" height="50">
      <path d="M11 21L32 3l8 9-20 20M16 16l9 11M20 13l9 11" />
      <path d="M10 21l11 11H10z" fill={INK} stroke="none" />
      <path d="M42 13c8 12 6 19 0 19s-8-7 0-19z" fill={INK} stroke="none" />
      <rect y="35" width="58" height="15" fill="#ffff00" stroke="none" />
    </Glyph>
  ),
};

const ToolItem = ({ name, label, split, disabled }) => (
  <>
    <Tool type="button" aria-label={label} $split={split} disabled={disabled}>
      {icons[name]}
    </Tool>
    {split && (
      <Drop type="button" aria-label={`${label} options`} disabled={disabled}>
        <Arrow />
      </Drop>
    )}
  </>
);

const RulerStrip = styled.div`
  padding: 11px 0 52px;
  border-bottom: 2px solid #cfcdca;
`;

const Ruler = styled.div`
  position: relative;
  display: flex;
  height: 36px;
  padding-left: 14px;
  background: #fff;
`;

const Inch = styled.div`
  flex: none;
  position: relative;
  width: 91px;
  text-align: center;
  padding-right: 4px;
  font-size: 22px;
  line-height: 36px;
  color: #949494;
  &::before {
    content: "";
    position: absolute;
    left: 0;
    top: 13px;
    width: 2px;
    height: 7px;
    background: #a3a3a3;
  }
  &::after {
    content: "";
    position: absolute;
    left: 45px;
    top: 0;
    width: 2px;
    height: 34px;
    background: linear-gradient(#aaa 2px, transparent 2px, transparent 32px, #aaa 32px);
  }
`;

const Marker = styled.svg`
  position: absolute;
  left: ${(p) => p.$x}px;
  top: ${(p) => p.$y}px;
`;

const inches = [4, 5, 6, 7, 8, 9, 10, 11, 12, 13, 14];
const tabStops = [0, 1, 2, 3, 4, 5];

const Document = styled.article`
  padding: 185px 0 467px 38px;
  background: #fff;
  color: #111;
  font-family: "Liberation Mono", monospace;
  font-size: 32px;
  line-height: 36px;
  overflow: hidden;
  white-space: nowrap;
`;

const Indent = styled.div`
  padding-left: 113px;
`;

const StoreHeading = styled.ol`
  margin: 0;
  padding-left: 228px;
  list-style: none;
  counter-reset: item;
  li {
    counter-increment: item;
    position: relative;
  }
  li::before {
    content: counter(item) ".";
    position: absolute;
    right: 100%;
    margin-right: 19px;
  }
  li::after {
    content: "";
    position: absolute;
    left: -1px;
    top: 2px;
    width: 3px;
    height: 32px;
    background: #000;
  }
`;

const Invoice = styled.table`
  margin-top: 74px;
  table-layout: fixed;
  border-collapse: collapse;
  width: 904px;
  col {
    width: 113px;
  }
  th,
  td {
    padding: 0;
    font-weight: 400;
    text-align: left;
    line-height: 36px;
  }
`;

const Closing = styled.p`
  margin: 37px 0 0;
`;

const StatusGap = styled.div`
  height: 99px;
  border-bottom: 3px solid #bfbcb8;
`;

const StatusBar = styled.footer`
  display: flex;
  align-items: center;
  height: 48px;
  font-size: 28px;
  line-height: 36px;
  color: #58595a;
  white-space: nowrap;
`;

const StatusCell = styled.div`
  flex: none;
  display: flex;
  align-items: center;
  justify-content: center;
  height: 36px;
  width: ${(p) => p.$width}px;
  overflow: hidden;
  border-right: 2px solid #d5d0cb;
`;

const StyleCell = styled(StatusCell)`
  justify-content: flex-start;
  span {
    flex: none;
    display: flex;
    justify-content: flex-end;
    width: 109px;
  }
`;

const InsertMode = styled.div`
  flex: none;
  display: flex;
  padding-left: 19px;
`;

const items = [1, 2, 3, 4, 5];

function WriterWindow() {
  return (
    <Writer>
      <WriterTitle />
      <Toolbar $height={97}>
        <ToolStart />
        <ToolItem name="undo" label="Undo" split />
        <ToolItem name="redo" label="Redo" split disabled />
        <Separator />
        <ToolItem name="find" label="Find and replace" />
        <ToolItem name="spell" label="Spelling" />
        <ToolItem name="pilcrow" label="Formatting marks" />
        <Separator />
        <ToolItem name="table" label="Insert table" split />
        <ToolItem name="image" label="Insert image" />
        <ToolItem name="chart" label="Insert chart" />
        <ToolItem name="textbox" label="Insert text box" />
        <Separator />
        <ToolItem name="pagebreak" label="Insert page break" />
      </Toolbar>
      <Toolbar $height={98}>
        <SizeBox>
          <SizeSelect aria-label="Font size" defaultValue="10">
            <option>10</option>
          </SizeSelect>
          <SizeArrow>
            <Arrow color="#666" width={18} height={12} />
          </SizeArrow>
        </SizeBox>
        <Separator />
        <ToolItem name="bold" label="Bold" />
        <ToolItem name="italic" label="Italic" />
        <ToolItem name="underline" label="Underline" />
        <ToolItem name="strike" label="Strikethrough" />
        <Separator />
        <ToolItem name="superscript" label="Superscript" />
        <ToolItem name="subscript" label="Subscript" />
        <Separator />
        <ToolItem name="clear" label="Clear formatting" />
        <Separator />
        <ToolItem name="color" label="Font colour" split />
        <ToolItem name="highlight" label="Highlighting" split />
      </Toolbar>
      <RulerStrip>
        <Ruler>
          {inches.map((n) => (
            <Inch key={n}>{n}</Inch>
          ))}
          <Marker $x={197} $y={-3} width="23" height="21" fill="#f5f4f2" stroke="#8c8c8c" strokeWidth="2">
            <path d="M2 2h19v8l-9 9-10-9z" />
          </Marker>
          <Marker $x={255} $y={18} width="23" height="21" fill="#f5f4f2" stroke="#8c8c8c" strokeWidth="2">
            <path d="M2 19h19v-8l-9-9-10 9z" />
          </Marker>
          {tabStops.map((n) => (
            <Marker key={n} $x={373 + n * 113} $y={28} width="12" height="10" fill="none" stroke="#8c8c8c" strokeWidth="2">
              <path d="M0 9h12M6 0v9" />
            </Marker>
          ))}
        </Ruler>
      </RulerStrip>
      <Document>
        <StoreHeading>
          <li>KJEI STORE</li>
        </StoreHeading>
        <Indent>ADDRESS : YEWLEWADI, PUNE 411048 MAHARASHTRA</Indent>
        <Indent>phone no : 7218973712/9763111462</Indent>
        <Indent>**invoice**</Indent>
        <Indent>2019-10-16</Indent>
        <Invoice>
          <colgroup>
            {[0, 1, 2, 3, 4, 5, 6, 7].map((n) => (
              <col key={n} />
            ))}
          </colgroup>
          <thead>
            <tr>
              <td />
              <td colSpan={7}>{"-".repeat(42)}</td>
            </tr>
            <tr>
              <td />
              <th>SN.</th>
              <th colSpan={2}>products</th>
              <th>Qty</th>
              <th colSpan={3}>Amount</th>
            </tr>
            <tr>
              <td />
              <td colSpan={7}>{"-".repeat(43)}</td>
            </tr>
          </thead>
          <tbody>
            {items.map((n) => (
              <tr key={n}>
                <td>{n}</td>
                <td colSpan={4}>Notebook.....</td>
                <td colSpan={2}>22</td>
                <td>440.0</td>
              </tr>
            ))}
          </tbody>
        </Invoice>
        <Closing>Total:Rs.2200.0</Closing>
        <Closing>Thanks for visiting</Closing>
      </Document>
      <StatusGap />
      <StatusBar>
        <StyleCell $width={337}>
          <span>ault Style</span>
        </StyleCell>
        <StatusCell $width={426}>English (India)</StatusCell>
        <StatusCell $width={163} />
        <InsertMode>
          <Glyph width="34" height="26" strokeWidth="2.500">
            <path d="M1 2h12M7 2v22M1 24h12M18 17v5h14v-5" />
          </Glyph>
        </InsertMode>
      </StatusBar>
    </Writer>
  );
}

export default function App() {
  return (
    <>
      <GlobalStyle />
      <Page>
        <LeftColumn>
          <AddProductDesktop />
          <StoreDesktop />
        </LeftColumn>
        <WriterWindow />
      </Page>
    </>
  );
}
